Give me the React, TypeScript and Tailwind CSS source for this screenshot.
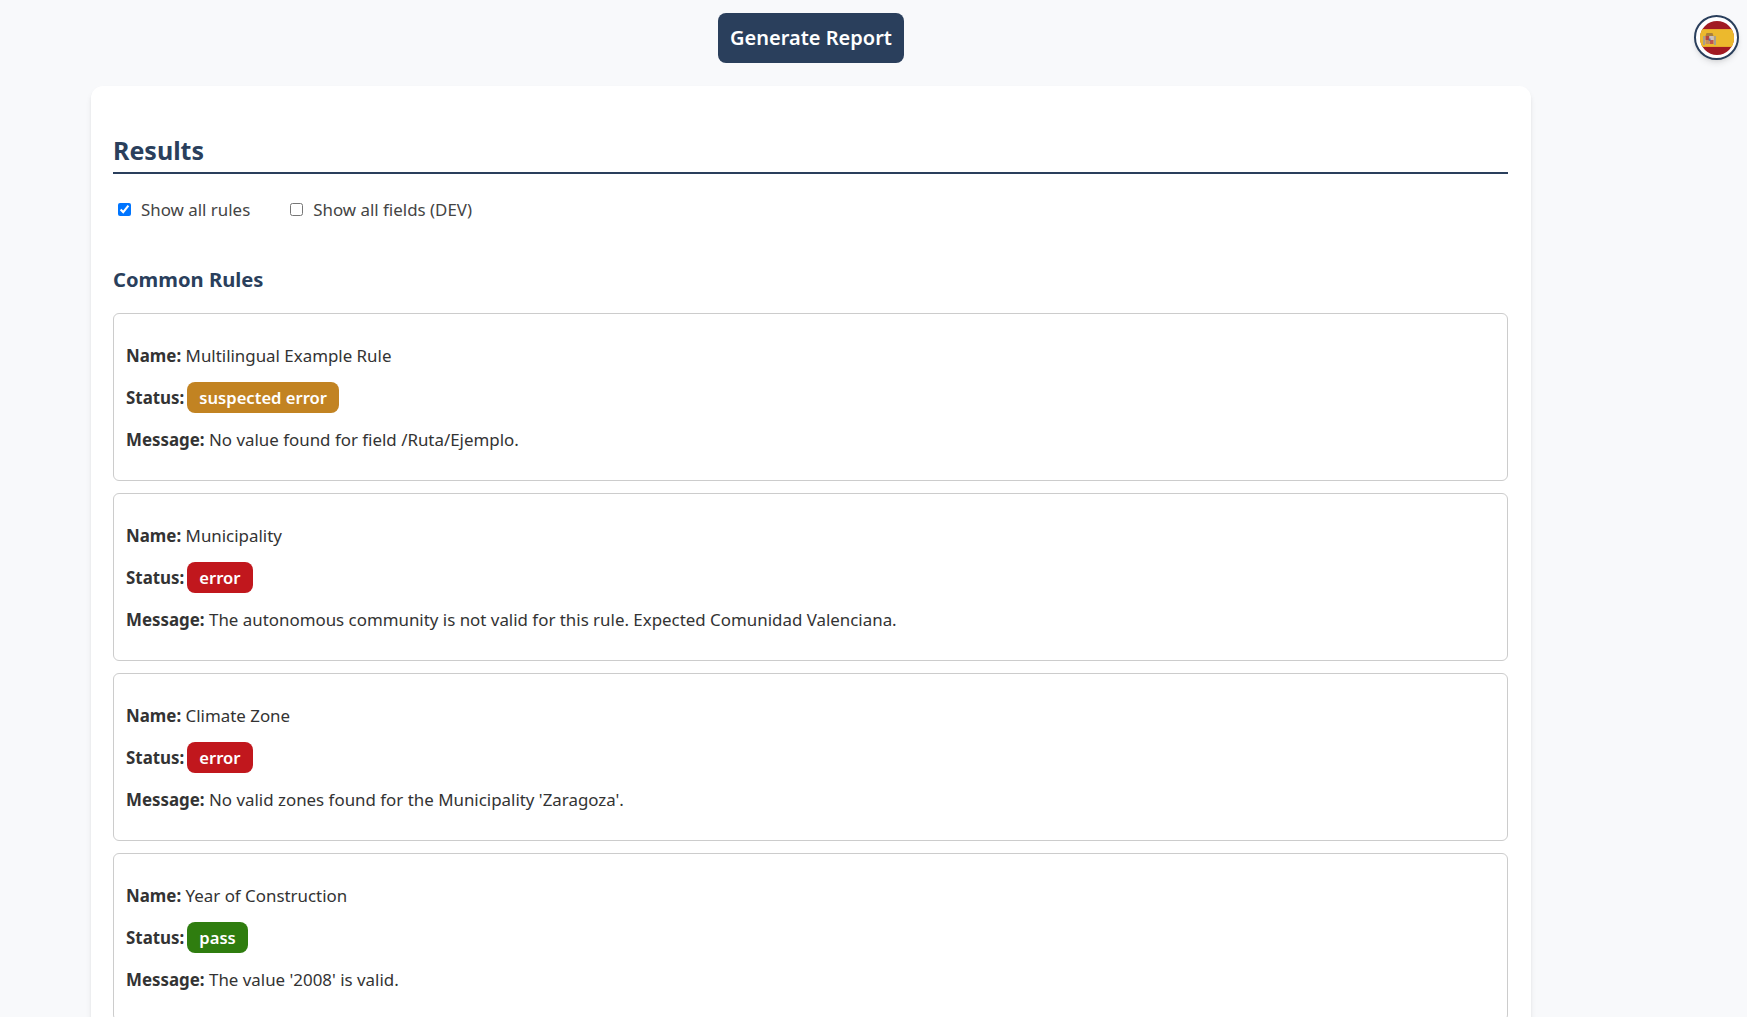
const rules = [
  { name: "Multilingual Example Rule", status: "suspected error", badge: "bg-[#c28322]", message: "No value found for field /Ruta/Ejemplo." },
  { name: "Municipality", status: "error", badge: "bg-[#c1171d]", message: "The autonomous community is not valid for this rule. Expected Comunidad Valenciana." },
  { name: "Climate Zone", status: "error", badge: "bg-[#c1171d]", message: "No valid zones found for the Municipality 'Zaragoza'." },
  { name: "Year of Construction", status: "pass", badge: "bg-[#2f7d0f]", message: "The value '2008' is valid." },
];

function FlagButton() {
  return (
    <div className="absolute right-2 top-[15px] flex h-[45px] w-[45px] items-center justify-center rounded-full border-2 border-[#2a3f5c] bg-white shadow-md">
      <svg width="34" height="34" viewBox="0 0 34 34">
        <clipPath id="flag-clip"><circle cx="17" cy="17" r="17" /></clipPath>
        <g clipPath="url(#flag-clip)">
          <rect width="34" height="34" fill="#a11a22" />
          <rect y="8" width="34" height="18" fill="#e8a92a" />
          <rect y="9" width="34" height="16" fill="#ecb92d" />
          {/* coat of arms */}
          <rect x="3" y="15" width="2" height="9" fill="#a8a08c" />
          <rect x="14" y="15" width="2" height="9" fill="#a8a08c" />
          <path d="M6.5 12h6l1 3h-8z" fill="#a9803a" />
          <rect x="5.5" y="15" width="8" height="8" rx="1" fill="#d9c8b0" />
          <rect x="5.5" y="15" width="4" height="4" fill="#b8443c" />
          <rect x="9.5" y="19" width="4" height="4" fill="#c0544a" />
          <rect x="9.5" y="15" width="4" height="4" fill="#c9c2c4" />
          <rect x="5.5" y="19" width="4" height="4" fill="#c78f5a" />
          <rect x="8.7" y="17.5" width="1.8" height="2.4" fill="#5f6f9c" />
        </g>
      </svg>
    </div>
  );
}

function RuleCard({ rule }: { rule: (typeof rules)[number] }) {
  return (
    <div className="rounded-md border border-[#cccccc] px-3 pb-[27px] pt-[29px] text-[16.9px] leading-[26px] text-[#333333]">
      <p><strong>Name:</strong> {rule.name}</p>
      <p className="mt-4">
        <strong>Status:</strong>
        <span className={`ml-[3px] rounded-lg px-3 py-1 text-[16.6px] font-semibold text-white ${rule.badge}`}>{rule.status}</span>
      </p>
      <p className="mt-4"><strong>Message:</strong> {rule.message}</p>
    </div>
  );
}

export default function App() {
  return (
    <div className="relative h-screen overflow-hidden bg-[#f8f9fb] font-['Noto_Sans',sans-serif]">
      <FlagButton />
      <div className="ml-[91px] w-[1440px]">
        <div className="flex justify-center pt-[13px]">
          <button className="h-[50px] rounded-lg bg-[#2a3f5c] px-3 text-[20px] font-semibold text-white">Generate Report</button>
        </div>
        <main className="mt-[23px] rounded-xl bg-white pb-10 pl-[22px] pr-[23px] pt-[46px] shadow-md">
          <h2 className="border-b-2 border-[#2a3f5c] pb-[2px] text-[25px] font-bold text-[#2a3f5c]">Results</h2>
          <div className="mt-[23px] flex items-center text-[16.9px] text-[#444444]">
            <label className="ml-[5px] flex items-center gap-[10px]">
              <input type="checkbox" defaultChecked className="h-[13px] w-[13px]" />
              Show all rules
            </label>
            <label className="ml-10 flex items-center gap-[10px]">
              <input type="checkbox" className="h-[13px] w-[13px]" />
              Show all fields (DEV)
            </label>
          </div>
          <h3 className="mt-[42px] text-[20.2px] font-bold text-[#2a3f5c]">Common Rules</h3>
          <div className="mt-[19px] flex flex-col gap-3">
            {rules.map((rule) => (
              <RuleCard key={rule.name} rule={rule} />
            ))}
          </div>
        </main>
      </div>
    </div>
  );
}
